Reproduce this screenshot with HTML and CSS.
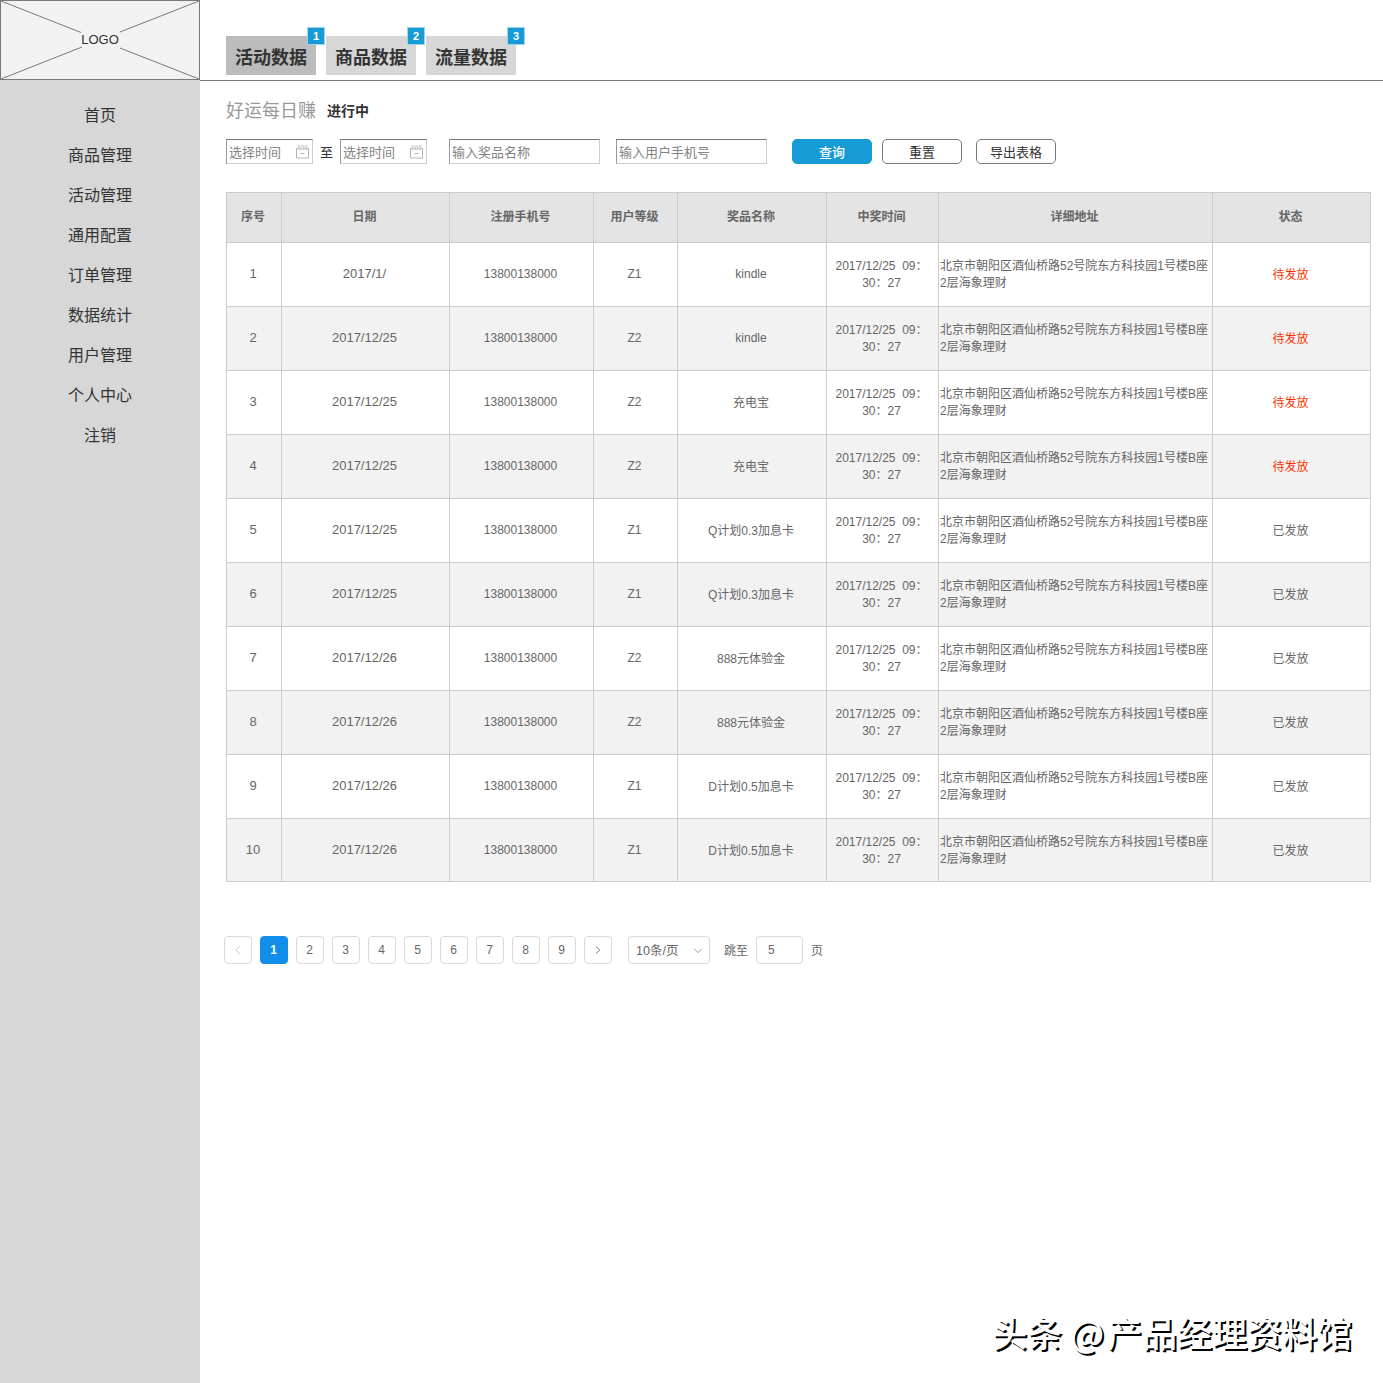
FILE: index.html
```html
<!DOCTYPE html>
<html lang="zh-CN">
<head>
<meta charset="utf-8">
<title>活动数据</title>
<link rel="stylesheet" href="styles.css">
</head>
<body>
<div class="app">
  <aside class="sidebar">
    <div class="logo">
      <svg class="logo-cross" width="200" height="80" viewBox="0 0 200 80" fill="none" stroke="#797979">
        <rect x=".5" y=".5" width="199" height="79"/>
        <path d="M1 1 81 32.5M120 32 199 1M1 79 82 47M120 48 199 79"/>
      </svg>
      <span class="logo-text">LOGO</span>
    </div>
    <nav class="menu">
      <a>首页</a><a>商品管理</a><a>活动管理</a><a>通用配置</a><a>订单管理</a><a>数据统计</a><a>用户管理</a><a>个人中心</a><a>注销</a>
    </nav>
  </aside>
  <main class="main">
    <header class="tabs">
      <a class="tab active">活动数据<span class="badge">1</span></a>
      <a class="tab">商品数据<span class="badge">2</span></a>
      <a class="tab">流量数据<span class="badge">3</span></a>
    </header>
    <section class="content">
      <div class="heading"><h1>好运每日赚</h1><span class="state">进行中</span></div>
      <div class="filters">
        <div class="field date">选择时间<svg width="15" height="16" viewBox="0 0 15 16" fill="none" stroke="#b5b5b5"><path d="M3 4.500H1.500v9.500h12V4.500H12M5 4.500h1.500M8.500 4.500H10"/><path d="M3.200 1.800h1.600v4H3.200zM6.700 1.800h1.600v4H6.700zM10.200 1.800h1.600v4h-1.600z" stroke-width=".7"/><path d="M5.500 9.500h4"/></svg></div>
        <span class="to">至</span>
        <div class="field date">选择时间<svg width="15" height="16" viewBox="0 0 15 16" fill="none" stroke="#b5b5b5"><path d="M3 4.500H1.500v9.500h12V4.500H12M5 4.500h1.500M8.500 4.500H10"/><path d="M3.200 1.800h1.600v4H3.200zM6.700 1.800h1.600v4H6.700zM10.200 1.800h1.600v4h-1.600z" stroke-width=".7"/><path d="M5.500 9.500h4"/></svg></div>
        <div class="field text prize">输入奖品名称</div>
        <div class="field text phone">输入用户手机号</div>
        <button class="btn primary">查询</button>
        <button class="btn reset">重置</button>
        <button class="btn">导出表格</button>
      </div>
      <table class="records">
        <colgroup><col class="c-no"><col class="c-date"><col class="c-phone"><col class="c-level"><col class="c-prize"><col class="c-time"><col class="c-addr"><col class="c-status"></colgroup>
        <thead><tr><th>序号</th><th>日期</th><th>注册手机号</th><th>用户等级</th><th>奖品名称</th><th>中奖时间</th><th>详细地址</th><th>状态</th></tr></thead>
        <tbody>
          <tr><td class="num">1</td><td class="num">2017/1/</td><td>13800138000</td><td>Z1</td><td>kindle</td><td class="time">2017/12/25  09：<br>30：27</td><td class="addr">北京市朝阳区酒仙桥路52号院东方科技园1号楼B座2层海象理财</td><td class="cn pending">待发放</td></tr>
          <tr><td class="num">2</td><td class="num">2017/12/25</td><td>13800138000</td><td>Z2</td><td>kindle</td><td class="time">2017/12/25  09：<br>30：27</td><td class="addr">北京市朝阳区酒仙桥路52号院东方科技园1号楼B座2层海象理财</td><td class="cn pending">待发放</td></tr>
          <tr><td class="num">3</td><td class="num">2017/12/25</td><td>13800138000</td><td>Z2</td><td class="cn">充电宝</td><td class="time">2017/12/25  09：<br>30：27</td><td class="addr">北京市朝阳区酒仙桥路52号院东方科技园1号楼B座2层海象理财</td><td class="cn pending">待发放</td></tr>
          <tr><td class="num">4</td><td class="num">2017/12/25</td><td>13800138000</td><td>Z2</td><td class="cn">充电宝</td><td class="time">2017/12/25  09：<br>30：27</td><td class="addr">北京市朝阳区酒仙桥路52号院东方科技园1号楼B座2层海象理财</td><td class="cn pending">待发放</td></tr>
          <tr><td class="num">5</td><td class="num">2017/12/25</td><td>13800138000</td><td>Z1</td><td class="cn">Q计划0.3加息卡</td><td class="time">2017/12/25  09：<br>30：27</td><td class="addr">北京市朝阳区酒仙桥路52号院东方科技园1号楼B座2层海象理财</td><td class="cn">已发放</td></tr>
          <tr><td class="num">6</td><td class="num">2017/12/25</td><td>13800138000</td><td>Z1</td><td class="cn">Q计划0.3加息卡</td><td class="time">2017/12/25  09：<br>30：27</td><td class="addr">北京市朝阳区酒仙桥路52号院东方科技园1号楼B座2层海象理财</td><td class="cn">已发放</td></tr>
          <tr><td class="num">7</td><td class="num">2017/12/26</td><td>13800138000</td><td>Z2</td><td class="cn">888元体验金</td><td class="time">2017/12/25  09：<br>30：27</td><td class="addr">北京市朝阳区酒仙桥路52号院东方科技园1号楼B座2层海象理财</td><td class="cn">已发放</td></tr>
          <tr><td class="num">8</td><td class="num">2017/12/26</td><td>13800138000</td><td>Z2</td><td class="cn">888元体验金</td><td class="time">2017/12/25  09：<br>30：27</td><td class="addr">北京市朝阳区酒仙桥路52号院东方科技园1号楼B座2层海象理财</td><td class="cn">已发放</td></tr>
          <tr><td class="num">9</td><td class="num">2017/12/26</td><td>13800138000</td><td>Z1</td><td class="cn">D计划0.5加息卡</td><td class="time">2017/12/25  09：<br>30：27</td><td class="addr">北京市朝阳区酒仙桥路52号院东方科技园1号楼B座2层海象理财</td><td class="cn">已发放</td></tr>
          <tr><td class="num">10</td><td class="num">2017/12/26</td><td>13800138000</td><td>Z1</td><td class="cn">D计划0.5加息卡</td><td class="time">2017/12/25  09：<br>30：27</td><td class="addr">北京市朝阳区酒仙桥路52号院东方科技园1号楼B座2层海象理财</td><td class="cn">已发放</td></tr>
        </tbody>
      </table>
      <div class="pager">
        <span class="page"><svg width="8" height="10" viewBox="0 0 8 10" fill="none" stroke="#ccc"><path d="M5.800 1 2 5l3.800 4"/></svg></span>
        <span class="page current">1</span><span class="page">2</span><span class="page">3</span><span class="page">4</span><span class="page">5</span><span class="page">6</span><span class="page">7</span><span class="page">8</span><span class="page">9</span>
        <span class="page"><svg width="8" height="10" viewBox="0 0 8 10" fill="none" stroke="#777"><path d="M2 1.500 5.800 5 2 8.500"/></svg></span>
        <div class="size">10条/页<svg width="8" height="6" viewBox="0 0 8 6" fill="none" stroke="#999"><path d="M.5 1 4 4.700 7.500 1"/></svg></div>
        <span class="jump">跳至</span>
        <div class="jump-input">5</div>
        <span class="unit">页</span>
      </div>
    </section>
  </main>
  <div class="watermark">头条 <span class="at">@</span>产品经理资料馆</div>
</div>
</body>
</html>
```
FILE: styles.css
```css
* { box-sizing: border-box; }
body {
  margin: 0;
  background: #fff;
  color: #333;
  font-family: "Liberation Sans", "Noto Sans CJK SC", sans-serif;
  font-size: 13px;
}
.app { position: relative; display: flex; width: 1383px; height: 1383px; overflow: hidden; }

.sidebar { width: 200px; background: #d7d7d7; }
.logo { position: relative; display: flex; align-items: center; justify-content: center; height: 80px; background: #f2f2f2; }
.logo-cross { position: absolute; left: 0; top: 0; }
.logo-text { position: relative; line-height: 20px; }
.menu { display: flex; flex-direction: column; padding-top: 14px; font-family: "Noto Sans CJK SC", sans-serif; }
.menu a { height: 40px; line-height: 40px; text-align: center; font-size: 16px; }

.main { flex: 1; min-width: 0; }
.tabs { display: flex; gap: 10px; height: 81px; padding: 36px 0 0 26px; border-bottom: 1px solid #797979; }
.tab { position: relative; width: 90px; height: 39px; line-height: 45px; text-align: center; font-size: 18px; font-weight: bold; background: #d7d7d7; }
.tab.active { background: #bcbcbc; }
.badge {
  position: absolute; right: -9px; top: -9px; width: 18px; height: 18px;
  border: 1px solid #9fd3ec; background: #169bd5; color: #fff;
  font: bold 11px/17px "Liberation Sans", sans-serif; text-align: center;
}

.content { padding: 17px 12px 0 26px; }
.heading { display: flex; align-items: center; gap: 11px; height: 26px; }
.heading h1 { margin: 0; font-size: 18px; font-weight: normal; line-height: 26px; color: #999; }
.state { font-size: 14px; font-weight: bold; line-height: 26px; }

.filters { display: flex; height: 25px; margin-top: 15px; line-height: 27px; }
.field { display: flex; align-items: center; height: 25px; padding-left: 2px; border: 1px solid #ccc; border-top-color: #767676; border-left-color: #999; color: #848484; line-height: 25px; }
.date { width: 87px; justify-content: space-between; padding-right: 2px; }
.to { width: 27px; text-align: center; }
.text { width: 151px; }
.prize { margin-left: 22px; }
.phone { margin: 0 25px 0 16px; }
.field { padding-top: 1px; }
.btn { width: 80px; height: 25px; padding: 1px 0 0; border: 1px solid #797979; border-radius: 5px; background: #fff; color: #333; font: inherit; line-height: 23px; }
.btn.primary { border-color: #169bd5; background: #169bd5; color: #fff; font-weight: 500; }
.btn.reset { margin: 0 14px 0 10px; }

.records { width: 1145px; margin-top: 28px; table-layout: fixed; border-collapse: separate; border-spacing: 0; border: 1px solid #ccc; border-width: 1px 0 0 1px; color: #666; font-size: 12px; line-height: 17px; text-align: center; }
.c-no { width: 55px; }
.c-date { width: 168px; }
.c-phone { width: 144px; }
.c-level { width: 84px; }
.c-prize { width: 149px; }
.c-time { width: 112px; }
.c-addr { width: 274px; }
.c-status { width: 158px; }
.records th, .records td { height: 64px; padding: 0 2px 0 0; border: 1px solid #ccc; border-width: 0 1px 1px 0; vertical-align: middle; }
.records th { height: 50px; background: #e4e4e4; font-weight: bold; padding-bottom: 1px; }
.records tr:nth-child(even) td { background: #f2f2f2; }
.records .num { font-size: 13px; padding-bottom: 2px; }
.records .time { white-space: pre; }
.records .addr { padding: 0 0 0 1px; text-align: left; }
.records .cn { padding-top: 1px; }
.records .pending { color: #f30; }
.records tbody tr:last-child td { height: 63px; }
.records tbody tr:last-child .time,
.records tbody tr:last-child .addr { padding-top: 1px; }
.records tbody tr:last-child .cn { padding-top: 2px; }

.pager { display: flex; gap: 8px; margin: 54px 0 0 -2px; color: #666; font-size: 12px; line-height: 28px; }
.page { display: flex; align-items: center; justify-content: center; width: 28px; height: 28px; padding-right: 1px; border: 1px solid #d9d9d9; border-radius: 4px; }
.current { border-color: #108ee9; background: #108ee9; color: #fff; font-weight: bold; }
.size { display: flex; align-items: center; justify-content: space-between; width: 82px; height: 28px; margin-left: 8px; padding: 1px 7px 0; border: 1px solid #d9d9d9; border-radius: 4px; font-size: 12.5px; }
.jump { margin-left: 6px; }
.jump, .unit { line-height: 30px; height: 28px; }
.jump-input { width: 47px; height: 28px; padding-left: 11px; border: 1px solid #d9d9d9; border-radius: 4px; line-height: 26px; }

.watermark {
  position: absolute; left: 992px; top: 1307px;
  color: #fff; font: 500 35px/50px "Noto Sans CJK SC", sans-serif; white-space: nowrap;
  text-shadow: 2px 2px 0 #000;
}
.at { margin-right: 3px; }
```
